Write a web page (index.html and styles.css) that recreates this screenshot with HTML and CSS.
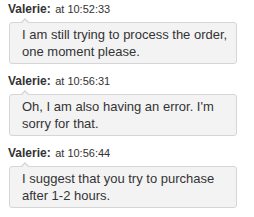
FILE: index.html
```html
<!DOCTYPE html>
<html lang="en">
<head>
    <meta charset="UTF-8">
    <meta name="viewport" content="width=device-width, initial-scale=1.0">
    <title>Chat</title>
    <link rel="stylesheet" href="styles.css">
</head>
<body>
    <div class="chat">
        <div class="message">
            <div class="meta"><span class="name">Valerie:</span> <span class="time">at 10:52:33</span></div>
            <div class="bubble">I am still trying to process the order, one moment please.</div>
        </div>
        <div class="message">
            <div class="meta"><span class="name">Valerie:</span> <span class="time">at 10:56:31</span></div>
            <div class="bubble">Oh, I am also having an error. I'm sorry for that.</div>
        </div>
        <div class="message">
            <div class="meta"><span class="name">Valerie:</span> <span class="time">at 10:56:44</span></div>
            <div class="bubble">I suggest that you try to purchase after 1-2 hours.</div>
        </div>
    </div>
</body>
</html>
```

FILE: styles.css
```css
body {
    margin: 0;
    font-family: 'Liberation Sans', Arial, sans-serif;
    color: #333;
    background: #fff;
}
.chat {
    padding: 0 0 0 8px;
}
.message {
    margin-bottom: 8px;
}
.meta {
    height: 16px;
    line-height: 16px;
}
.name {
    font-weight: bold;
    font-size: 12px;
}
.time {
    font-size: 11px;
}
.bubble {
    position: relative;
    margin: 6px 0 0 1px;
    width: 212px;
    padding: 3px 2px 3px 12px;
    background: #f3f3f3;
    border: 1px solid #d6d6d6;
    border-radius: 3px;
    font-size: 13px;
    line-height: 17px;
}
.bubble::before,
.bubble::after {
    content: "";
    position: absolute;
    left: 11px;
    top: -9px;
    border: 4px solid transparent;
    border-bottom: 4px solid #d6d6d6;
}
.bubble::after {
    top: -7px;
    border-bottom-color: #f3f3f3;
}
```
